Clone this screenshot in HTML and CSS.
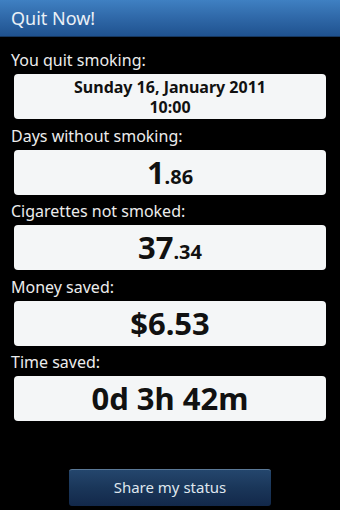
FILE: index.html
```html
<!DOCTYPE html>
<html>
<head>
<meta charset="utf-8">
<link rel="stylesheet" href="styles.css">
</head>
<body>
<div class="app">
  <header class="titlebar">Quit Now!</header>
  <main class="content">
    <div class="label">You quit smoking:</div>
    <div class="box box-date"><div>Sunday 16, January 2011</div><div>10:00</div></div>
    <div class="label">Days without smoking:</div>
    <div class="box box-big"><span class="int">1</span><span class="frac">.86</span></div>
    <div class="label">Cigarettes not smoked:</div>
    <div class="box box-big"><span class="int">37</span><span class="frac">.34</span></div>
    <div class="label">Money saved:</div>
    <div class="box box-big"><span class="int">$6.53</span></div>
    <div class="label">Time saved:</div>
    <div class="box box-big"><span class="int">0d 3h 42m</span></div>
  </main>
  <footer class="footer">
    <button class="share">Share my status</button>
  </footer>
</div>
</body>
</html>
```

FILE: styles.css
```css
html, body {
  margin: 0;
  padding: 0;
  background: #000;
}
body {
  font-family: "Noto Sans", "Open Sans", sans-serif;
}
.app {
  width: 340px;
  height: 510px;
  display: flex;
  flex-direction: column;
  background: #000;
}
.titlebar {
  height: 37px;
  box-sizing: border-box;
  padding-left: 11px;
  line-height: 36px;
  font-size: 18px;
  color: #eaf0f6;
  background: linear-gradient(to bottom, #3f80c2 0%, #2f68a8 50%, #1f528f 100%);
  border-bottom: 1px solid #16375f;
}
.content {
  display: flex;
  flex-direction: column;
  padding: 11px 14px 0 14px;
}
.label {
  margin-left: -3px;
  font-size: 16px;
  line-height: 24px;
  color: #ececec;
  margin-bottom: 2px;
}
.box {
  height: 45px;
  box-sizing: border-box;
  background: #f4f6f7;
  border-radius: 4px;
  color: #111;
  text-align: center;
  font-weight: bold;
  margin-bottom: 4.5px;
}
.box-date {
  font-size: 16px;
  line-height: 20px;
  padding-top: 3px;
}
.box-big {
  line-height: 45px;
}
.int {
  font-size: 31px;
}
.frac {
  font-size: 20px;
}
.footer {
  margin-top: auto;
  display: flex;
  justify-content: center;
  padding-bottom: 4px;
}
.share {
  width: 202px;
  height: 37px;
  border: none;
  border-top: 1px solid #5a7896;
  border-radius: 3px;
  background: linear-gradient(to bottom, #24466d 0%, #1a3659 50%, #12284a 100%);
  color: #dfe6ee;
  font-family: "Noto Sans", "Open Sans", sans-serif;
  font-size: 15px;
  padding: 0 0 3px 0;
}
```
